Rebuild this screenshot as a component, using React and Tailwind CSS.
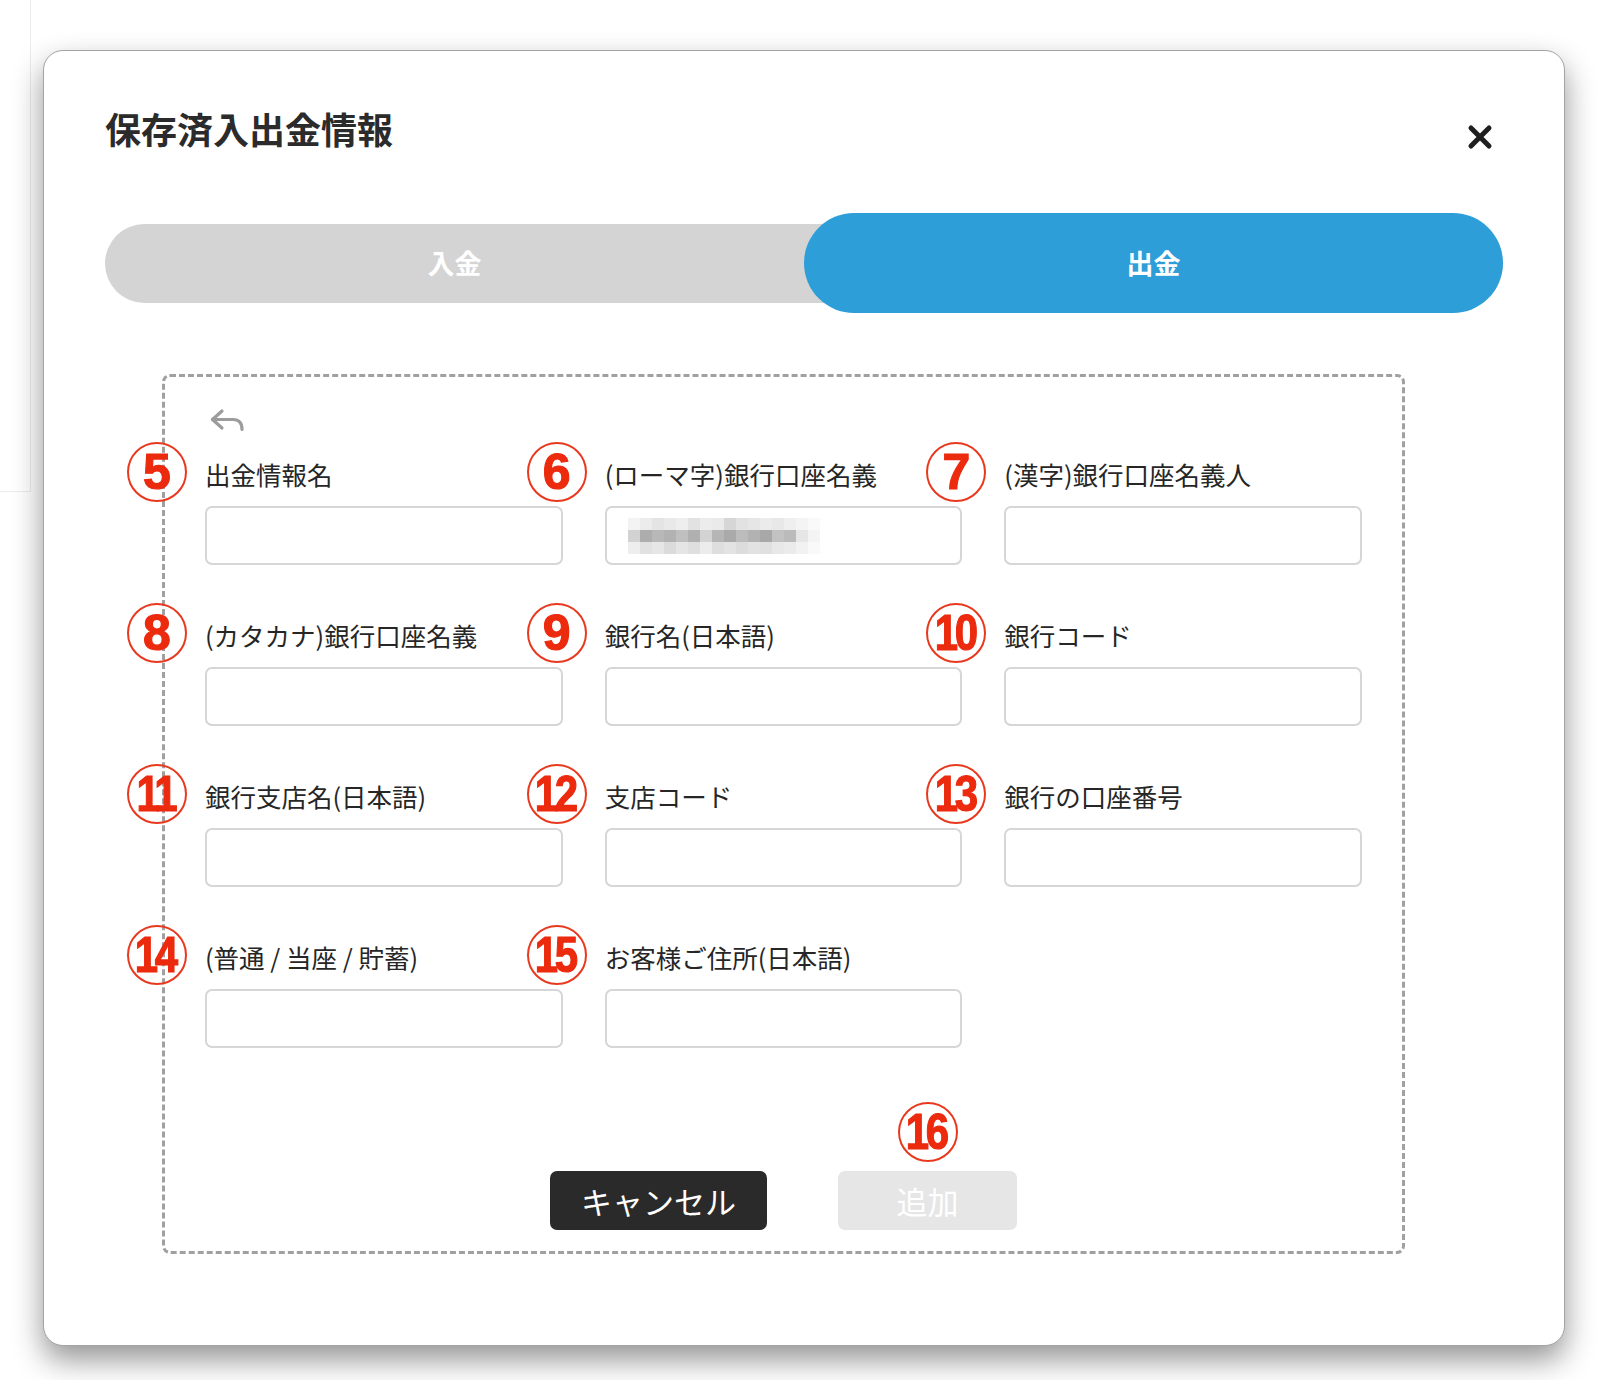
import clsx from "clsx";

const mosaic = [
	["#f3f3f3", "#ececec", "#e4e4e4", "#e9e9e9", "#eeeeee", "#e2e2e2", "#ececec", "#eaeaea", "#d6d6d6", "#e2e2e2", "#e6e6e6", "#ebebeb", "#e8e8e8", "#efefef", "#f4f4f4", "#f9f9f9"],
	["#d2d2d2", "#adadad", "#b8b8b8", "#b2b2b2", "#bfbfbf", "#b0b0b0", "#d3d3d3", "#b6b6b6", "#aaaaaa", "#bcbcbc", "#b2b2b2", "#a8a8a8", "#c2c2c2", "#bbbbbb", "#e6e6e6", "#f4f4f4"],
	["#eeeeee", "#e1e1e1", "#e6e6e6", "#dbdbdb", "#e5e5e5", "#dfdfdf", "#ececec", "#dedede", "#e3e3e3", "#dcdcdc", "#e2e2e2", "#e0e0e0", "#e8e8e8", "#ebebeb", "#f2f2f2", "#f9f9f9"],
];

const fields = [
	{ n: 5, label: "出金情報名" },
	{ n: 6, label: "(ローマ字)銀行口座名義", blurred: true },
	{ n: 7, label: "(漢字)銀行口座名義人" },
	{ n: 8, label: "(カタカナ)銀行口座名義" },
	{ n: 9, label: "銀行名(日本語)" },
	{ n: 10, label: "銀行コード" },
	{ n: 11, label: "銀行支店名(日本語)" },
	{ n: 12, label: "支店コード" },
	{ n: 13, label: "銀行の口座番号" },
	{ n: 14, label: "(普通 / 当座 / 貯蓄)" },
	{ n: 15, label: "お客様ご住所(日本語)" },
];

// red circled number, annotation drawn over the screenshot
const Mark = ({ n, className }) => (
	<span
		className={clsx(
			"absolute flex items-center justify-center w-[60px] h-[60px] rounded-full border-[2.5px] border-[#e8391f]",
			className
		)}
	>
		<span
			className={clsx(
				"font-['Liberation_Sans',Arial,sans-serif] font-bold text-[#ec2a0e] text-[50px] leading-none [-webkit-text-stroke:1.2px_#ec2a0e]",
				n > 9 && "scale-x-[0.84] tracking-[-4px] -ml-[4px]"
			)}
		>
			{n}
		</span>
	</span>
);

const Blurred = () => (
	<div className="flex flex-col blur-[0.6px]">
		{mosaic.map((row, i) => (
			<div key={i} className="flex">
				{row.map((c, j) => (
					<div key={j} className="w-[12px] h-[12px]" style={{ backgroundColor: c }} />
				))}
			</div>
		))}
	</div>
);

const Field = ({ n, label, blurred }) => (
	<div className="flex flex-col">
		<div className="relative h-[32px] flex items-center">
			<Mark n={n} className="right-full mr-[18px] top-[-16px]" />
			<span className="text-[25.5px] text-[#262626] leading-none whitespace-nowrap">{label}</span>
		</div>
		<div className="mt-[16px] h-[59px] border-2 border-[#d6d6d6] rounded-[7px] bg-white flex items-center pl-[21px]">
			{blurred && <Blurred />}
		</div>
	</div>
);

const BackIcon = () => (
	<svg width="37" height="25" viewBox="0 0 37 25" fill="none" stroke="#9c9c9c" strokeWidth="3.2" strokeLinecap="round" strokeLinejoin="round">
		<path d="M13 3 L3.5 11.5 L13 20" />
		<path d="M3.5 11.5 H24 Q33 11.5 33 21.5" />
	</svg>
);

const App = () => {
	return (
		<div className="relative w-[1608px] h-[1380px] bg-white overflow-hidden font-['Noto_Sans_CJK_JP','Noto_Sans',sans-serif]">
			{/* page behind the modal */}
			<div className="w-[31px] h-[492px] border-r border-b border-[#ececec]" />

			<div className="absolute left-[43px] top-[50px] w-[1522px] h-[1296px] bg-white rounded-[20px] border border-[#a3a3a3] shadow-[0_14px_30px_rgba(0,0,0,0.42)] px-[61px] pt-[59px]">
				<div className="flex items-start justify-between h-[36px]">
					<h2 className="text-[36px] font-bold text-[#2b2b2b] leading-none">保存済入出金情報</h2>
					<svg width="26" height="26" viewBox="0 0 26 26" className="mr-[10px] mt-[14px]" stroke="#1f1f1f" strokeWidth="5" strokeLinecap="round">
						<path d="M4 4 L22 22 M22 4 L4 22" />
					</svg>
				</div>

				{/* tabs */}
				<div className="mt-[67px] h-[100px] flex items-center">
					<div className="w-full h-[79px] rounded-full bg-[#d4d4d4] flex items-center">
						<div className="w-1/2 text-center text-white text-[27px] font-bold">入金</div>
						<div className="w-1/2 h-[100px] rounded-full bg-[#2e9ed9] flex items-center justify-center text-white text-[27px] font-bold">
							出金
						</div>
					</div>
				</div>

				{/* form */}
				<div className="mt-[61px] ml-[57px] w-[1243px] h-[880px] border-[3px] border-dashed border-[#a0a0a0] rounded-[8px] px-[40px] pt-[31px]">
					<div className="ml-[4px]">
						<BackIcon />
					</div>
					<div className="mt-[25px] grid grid-cols-3 gap-x-[42px] gap-y-[54px]">
						{fields.map((f) => (
							<Field key={f.n} {...f} />
						))}
					</div>
					<div className="mt-[123px] flex justify-center gap-[71px]">
						<button className="w-[217px] h-[59px] rounded-[7px] bg-[#2a2a2a] text-white text-[31px] leading-none">
							キャンセル
						</button>
						<div className="relative">
							<Mark n={16} className="bottom-full mb-[9px] left-1/2 -translate-x-1/2" />
							<button className="w-[179px] h-[59px] rounded-[7px] bg-[#e6e6e6] text-white text-[31px] leading-none">
								追加
							</button>
						</div>
					</div>
				</div>
			</div>
		</div>
	);
};

export default App;
